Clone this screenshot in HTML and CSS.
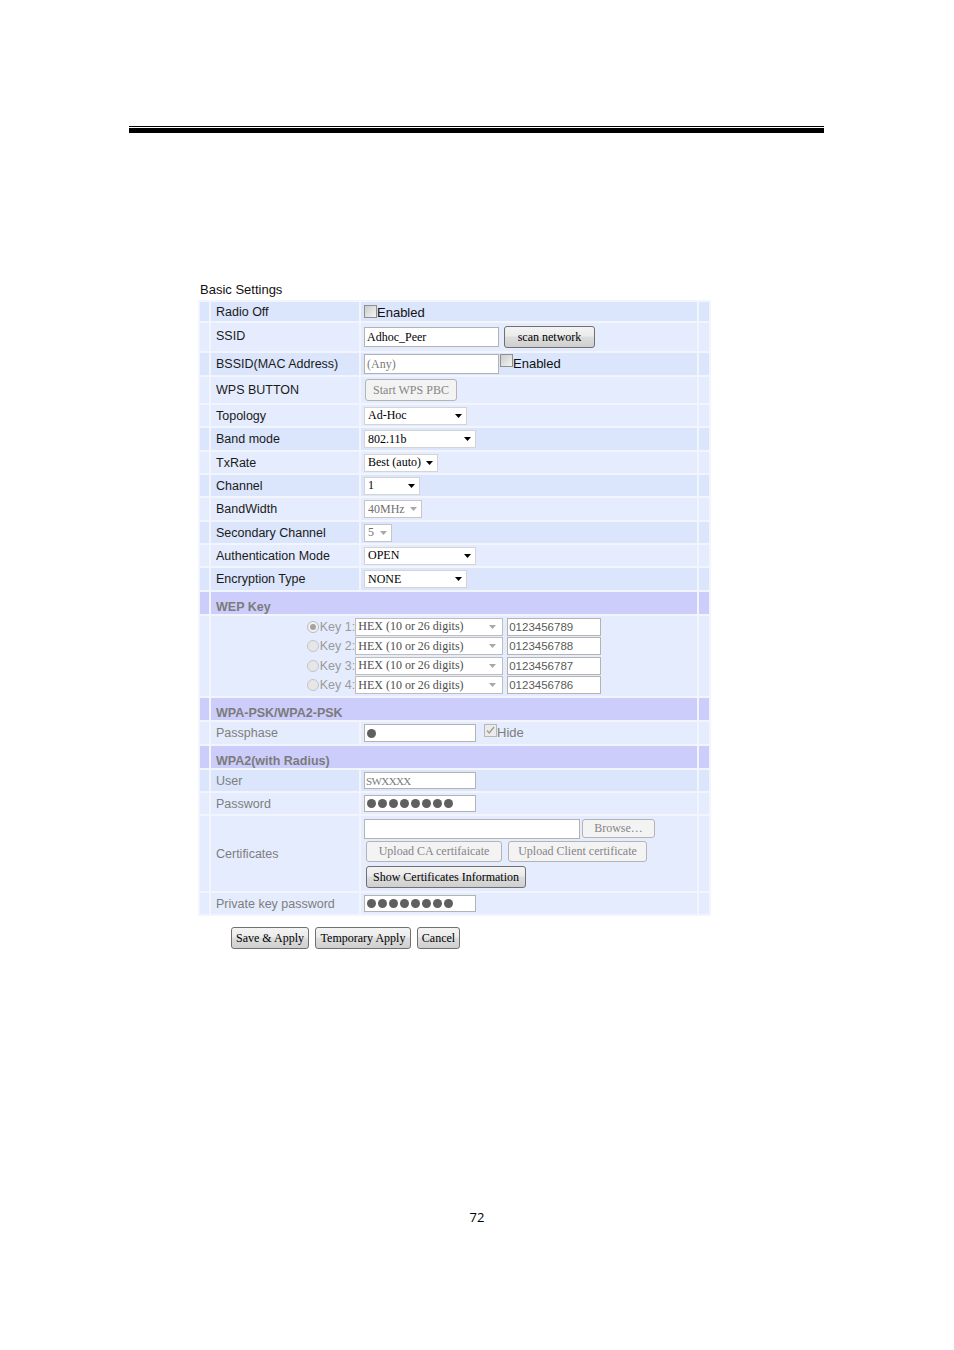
FILE: index.html
```html
<!DOCTYPE html>
<html>
<head>
<meta charset="utf-8">
<title>Basic Settings</title>
<link rel="stylesheet" href="styles.css">
</head>
<body>
<div class="rule"><div class="thin"></div><div class="thick"></div></div>

<section class="form">
  <div class="title">Basic Settings</div>
  <table class="grid">
    <colgroup><col class="c1"><col class="c2"><col class="c3"><col class="c4"></colgroup>

    <tr class="dk h19"><td></td><td class="lbl">Radio Off</td>
      <td class="vc"><div class="val"><span class="cb"></span><span class="cbt">Enabled</span></div></td><td></td></tr>

    <tr class="lt h28"><td></td><td class="lbl up">SSID</td>
      <td class="vc"><div class="val"><div class="inp w135 h20">Adhoc_Peer</div><button class="btn w91 h22 ml5">scan network</button></div></td><td></td></tr>

    <tr class="dk h22"><td></td><td class="lbl">BSSID(MAC Address)</td>
      <td class="vc"><div class="val"><div class="inp w135 h20 gray">(Any)</div><span class="cb top ml1"></span><span class="cbt nop">Enabled</span></div></td><td></td></tr>

    <tr class="lt h26"><td></td><td class="lbl">WPS BUTTON</td>
      <td class="vc"><div class="val"><button class="btn dis w92 h22 ml1">Start WPS PBC</button></div></td><td></td></tr>

    <tr class="lt h21"><td></td><td class="lbl">Topology</td>
      <td class="vc"><div class="val"><span class="sel w103">Ad-Hoc<svg class="arr" width="7" height="4" viewBox="0 0 7 4"><path d="M0 0h7L3.5 4z"/></svg></span></div></td><td></td></tr>

    <tr class="dk h22"><td></td><td class="lbl">Band mode</td>
      <td class="vc"><div class="val"><span class="sel w112">802.11b<svg class="arr" width="7" height="4" viewBox="0 0 7 4"><path d="M0 0h7L3.5 4z"/></svg></span></div></td><td></td></tr>

    <tr class="lt h21"><td></td><td class="lbl">TxRate</td>
      <td class="vc"><div class="val"><span class="sel w74">Best (auto)<svg class="arr" width="7" height="4" viewBox="0 0 7 4"><path d="M0 0h7L3.5 4z"/></svg></span></div></td><td></td></tr>

    <tr class="dk h21"><td></td><td class="lbl">Channel</td>
      <td class="vc"><div class="val"><span class="sel w56">1<svg class="arr" width="7" height="4" viewBox="0 0 7 4"><path d="M0 0h7L3.5 4z"/></svg></span></div></td><td></td></tr>

    <tr class="lt h22"><td></td><td class="lbl">BandWidth</td>
      <td class="vc"><div class="val"><span class="sel dis w58">40MHz<svg class="arr" width="7" height="4" viewBox="0 0 7 4"><path d="M0 0h7L3.5 4z"/></svg></span></div></td><td></td></tr>

    <tr class="dk h21"><td></td><td class="lbl">Secondary Channel</td>
      <td class="vc"><div class="val"><span class="sel dis w28">5<svg class="arr" width="7" height="4" viewBox="0 0 7 4"><path d="M0 0h7L3.5 4z"/></svg></span></div></td><td></td></tr>

    <tr class="lt h21"><td></td><td class="lbl">Authentication Mode</td>
      <td class="vc"><div class="val"><span class="sel w112">OPEN<svg class="arr" width="7" height="4" viewBox="0 0 7 4"><path d="M0 0h7L3.5 4z"/></svg></span></div></td><td></td></tr>

    <tr class="dk h22"><td></td><td class="lbl">Encryption Type</td>
      <td class="vc"><div class="val"><span class="sel w103">NONE<svg class="arr" width="7" height="4" viewBox="0 0 7 4"><path d="M0 0h7L3.5 4z"/></svg></span></div></td><td></td></tr>

    <tr class="hd h22"><td></td><td class="hdt" colspan="2">WEP Key</td><td></td></tr>

    <tr class="lt h80"><td></td><td colspan="2">
      <div class="keys">
        <div class="key">
          <svg class="rd" width="12" height="12" viewBox="0 0 12 12"><circle cx="6" cy="6" r="5.5" fill="#f2f2f2" stroke="#b9b9b9"/><circle cx="6" cy="6" r="3" fill="#a3a3a3"/></svg>
          <span class="klbl">Key 1:</span>
          <span class="sel dis wep w148">HEX (10 or 26 digits)<svg class="arr" width="7" height="4" viewBox="0 0 7 4"><path d="M0 0h7L3.5 4z"/></svg></span>
          <div class="inp kin w94 h18">0123456789</div>
        </div>
        <div class="key">
          <svg class="rd" width="12" height="12" viewBox="0 0 12 12"><circle cx="6" cy="6" r="5.5" fill="#e6e6e6" stroke="#c4c4c4"/></svg>
          <span class="klbl">Key 2:</span>
          <span class="sel dis wep w148">HEX (10 or 26 digits)<svg class="arr" width="7" height="4" viewBox="0 0 7 4"><path d="M0 0h7L3.5 4z"/></svg></span>
          <div class="inp kin w94 h18">0123456788</div>
        </div>
        <div class="key">
          <svg class="rd" width="12" height="12" viewBox="0 0 12 12"><circle cx="6" cy="6" r="5.5" fill="#e6e6e6" stroke="#c4c4c4"/></svg>
          <span class="klbl">Key 3:</span>
          <span class="sel dis wep w148">HEX (10 or 26 digits)<svg class="arr" width="7" height="4" viewBox="0 0 7 4"><path d="M0 0h7L3.5 4z"/></svg></span>
          <div class="inp kin w94 h18">0123456787</div>
        </div>
        <div class="key">
          <svg class="rd" width="12" height="12" viewBox="0 0 12 12"><circle cx="6" cy="6" r="5.5" fill="#e6e6e6" stroke="#c4c4c4"/></svg>
          <span class="klbl">Key 4:</span>
          <span class="sel dis wep w148">HEX (10 or 26 digits)<svg class="arr" width="7" height="4" viewBox="0 0 7 4"><path d="M0 0h7L3.5 4z"/></svg></span>
          <div class="inp kin w94 h18">0123456786</div>
        </div>
      </div>
    </td><td></td></tr>

    <tr class="hd h22"><td></td><td class="hdt" colspan="2">WPA-PSK/WPA2-PSK</td><td></td></tr>

    <tr class="lt h22"><td></td><td class="lbl dis">Passphase</td>
      <td class="vc"><div class="val"><div class="inp w112 h18"><span class="dot"></span></div><span class="cb chk top ml8"><svg width="11" height="11" viewBox="0 0 11 11"><path d="M2 5.5l2.2 2.5L9 2" fill="none" stroke="#9d9d9d" stroke-width="1.3"/></svg></span><span class="cbt dis nop">Hide</span></div></td><td></td></tr>

    <tr class="hd h22"><td></td><td class="hdt" colspan="2">WPA2(with Radius)</td><td></td></tr>

    <tr class="dk h21"><td></td><td class="lbl dis">User</td>
      <td class="vc"><div class="val"><div class="inp w112 h17 usr">SWXXXX</div></div></td><td></td></tr>

    <tr class="lt h21"><td></td><td class="lbl dis">Password</td>
      <td class="vc"><div class="val"><div class="inp w112 h17"><span class="dot"></span><span class="dot"></span><span class="dot"></span><span class="dot"></span><span class="dot"></span><span class="dot"></span><span class="dot"></span><span class="dot"></span></div></div></td><td></td></tr>

    <tr class="lt h75"><td></td><td class="lbl dis">Certificates</td>
      <td class="vc">
        <div class="certs">
          <div class="crow"><div class="inp w216 h20"></div><button class="btn dis w73 h19 ml2">Browse…</button></div>
          <div class="crow mt2"><button class="btn dis w136 h21 ml2">Upload CA certifaicate</button><button class="btn dis w139 h21 ml6">Upload Client certificate</button></div>
          <div class="crow mt4"><button class="btn w160 h22 ml2">Show Certificates Information</button></div>
        </div>
      </td><td></td></tr>

    <tr class="lt h21"><td></td><td class="lbl dis">Private key password</td>
      <td class="vc"><div class="val"><div class="inp w112 h17"><span class="dot"></span><span class="dot"></span><span class="dot"></span><span class="dot"></span><span class="dot"></span><span class="dot"></span><span class="dot"></span><span class="dot"></span></div></div></td><td></td></tr>
  </table>

  <div class="actions">
    <button class="btn w78 h22">Save &amp; Apply</button>
    <button class="btn w96 h22">Temporary Apply</button>
    <button class="btn w43 h22">Cancel</button>
  </div>
</section>

<div class="pnum">72</div>
</body>
</html>
```

FILE: styles.css
```css
body {
  margin: 0;
  background: #fff;
  color: #000;
  font-family: "Liberation Sans", Arial, sans-serif;
}

.rule {
  padding-top: 126px;
  margin-left: 129px;
  width: 695px;
}
.thin { height: 1px; background: #000; }
.thick { height: 5px; margin-top: 1px; background: #000; }

.form {
  margin-top: 149px;
  margin-left: 198px;
}
.title {
  margin-left: 2px;
  height: 16px;
  line-height: 16px;
  margin-bottom: 2px;
  padding-top: 1px;
  margin-top: -1px;
  font-size: 13px;
  color: #111;
}

.grid {
  border-collapse: separate;
  border-spacing: 2px;
  table-layout: fixed;
  width: 513px;
  background: #f2f5fe;
}
.grid td { padding: 0; vertical-align: middle; }
.c1 { width: 9px; }
.c2 { width: 148px; }
.c3 { width: 336px; }
.c4 { width: 10px; }

tr.dk td { background: #dbe5fb; }
tr.lt td { background: #e5ecfd; }
tr.hd td { background: #cdcdfb; }

tr.h19 { height: 19px; }
tr.h21 { height: 21px; }
tr.h22 { height: 22px; }
tr.h26 { height: 26px; }
tr.h28 { height: 28px; }
tr.h75 { height: 75px; }
tr.h80 { height: 80px; }

.grid td.lbl {
  padding-left: 5px;
  font-size: 12.5px;
  color: #1a1a1a;
  white-space: nowrap;
}
.grid td.lbl.up { padding-bottom: 2px; }
.grid td.lbl.dis { color: #7e7e7e; }
.grid td.vc { padding-left: 3px; }
.grid td.hdt {
  vertical-align: top;
  padding: 8px 0 0 5px;
  font-size: 12.5px;
  line-height: 14px;
  font-weight: bold;
  color: #7b7b7b;
}

.val { display: flex; align-items: center; }

.cb {
  flex: none;
  box-sizing: border-box;
  width: 13px;
  height: 13px;
  border: 1px solid #8e8f8f;
  background: linear-gradient(135deg, #cdcdcd, #f3f3f3);
}
.cb.top { align-self: flex-start; }
.cb.chk {
  border-color: #b7b7b7;
  background: #ebebeb;
  display: flex;
  align-items: center;
  justify-content: center;
}
.cb.chk svg { display: block; }
.cbt { font-size: 13px; color: #111; line-height: 15px; padding-top: 2px; }
.cbt.nop { padding-top: 0; margin-top: -2px; }
.cbt.dis { color: #7e7e7e; }

.inp {
  box-sizing: border-box;
  display: flex;
  align-items: center;
  padding: 0 2px;
  border: 1px solid #b3b3b3;
  background: #fff;
  font-family: "Liberation Serif", "Times New Roman", serif;
  font-size: 12px;
  color: #000;
  white-space: nowrap;
  overflow: hidden;
}
.inp.gray { color: #7a7a7a; }
.inp.usr { font-size: 11px; letter-spacing: -0.6px; color: #7a7a7a; padding-left: 1px; }
.inp.kin {
  font-family: "Liberation Sans", Arial, sans-serif;
  font-size: 11.5px;
  color: #5a5a5a;
  padding-left: 1px;
}

.dot {
  flex: none;
  width: 9px;
  height: 9px;
  border-radius: 50%;
  background: #5f5f5f;
  margin-right: 2px;
}

.sel {
  box-sizing: border-box;
  display: inline-flex;
  align-items: center;
  justify-content: space-between;
  height: 18px;
  padding: 0 4px 0 3px;
  border: 1px solid #d4d4d4;
  background: #fff;
  font-family: "Liberation Serif", "Times New Roman", serif;
  font-size: 12px;
  color: #000;
  white-space: nowrap;
}
.sel .arr { flex: none; fill: #000; }
.sel.dis { border-color: #c6c6c6; color: #6f6f6f; }
.sel.dis .arr { fill: #a8a8a8; }
.sel.wep { color: #4d4d4d; padding-right: 6px; padding-left: 2px; border-color: #bdbdbd; }

.btn {
  box-sizing: border-box;
  display: inline-flex;
  align-items: center;
  justify-content: center;
  padding: 0;
  margin: 0;
  border: 1px solid #707070;
  border-radius: 3px;
  background: linear-gradient(#f3f3f3 0%, #ebebeb 45%, #dddddd 50%, #cfcfcf 100%);
  font-family: "Liberation Serif", "Times New Roman", serif;
  font-size: 12px;
  color: #000;
  white-space: nowrap;
}
.btn.dis {
  border-color: #b4b4b4;
  background: #f3f3f3;
  color: #858585;
}

.keys { display: flex; flex-direction: column; align-items: center; }
.key { display: flex; align-items: center; height: 19.5px; }
.rd { flex: none; display: block; }
.klbl { font-size: 12.5px; color: #9a9a9a; margin-left: 1px; }
.key .inp { margin-left: 4px; }

.certs { display: flex; flex-direction: column; }
.crow { display: flex; align-items: flex-start; }

.w28 { width: 28px; }
.w43 { width: 43px; }
.w56 { width: 56px; }
.w58 { width: 58px; }
.w73 { width: 73px; }
.w74 { width: 74px; }
.w78 { width: 78px; }
.w91 { width: 91px; }
.w92 { width: 92px; }
.w94 { width: 94px; }
.w96 { width: 96px; }
.w103 { width: 103px; }
.w112 { width: 112px; }
.w135 { width: 135px; }
.w136 { width: 136px; }
.w139 { width: 139px; }
.w148 { width: 148px; }
.w160 { width: 160px; }
.w216 { width: 216px; }

.h17 { height: 17px; }
.h18 { height: 18px; }
.h19 { height: 19px; }
.h20 { height: 20px; }
.h21 { height: 21px; }
.h22 { height: 22px; }

.ml1 { margin-left: 1px; }
.ml2 { margin-left: 2px; }
.ml5 { margin-left: 5px; }
.ml6 { margin-left: 6px; }
.ml8 { margin-left: 8px; }
.mt2 { margin-top: 2px; }
.mt4 { margin-top: 4px; }

.actions {
  margin-top: 11px;
  margin-left: 33px;
  display: flex;
  gap: 6px;
}

.pnum {
  margin-top: 260px;
  text-align: center;
  font-family: "Open Sans", "Liberation Sans", sans-serif;
  font-size: 13px;
  line-height: 16px;
  color: #000;
}
```
